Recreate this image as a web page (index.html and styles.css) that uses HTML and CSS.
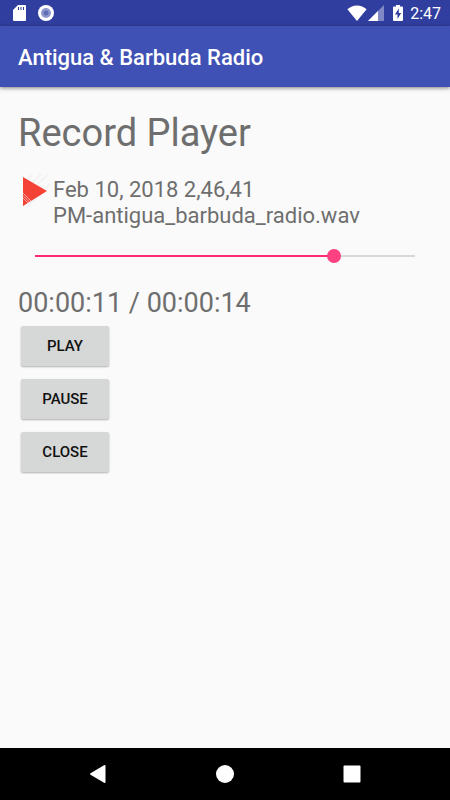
FILE: index.html
```html
<!DOCTYPE html>
<html lang="en">
<head>
<meta charset="utf-8">
<meta name="viewport" content="width=device-width, initial-scale=1">
<title>Antigua &amp; Barbuda Radio</title>
<link rel="stylesheet" href="styles.css">
</head>
<body>
<div class="status-bar">
  <div class="status-group">
    <svg width="14" height="18" viewBox="0 0 14 18" aria-hidden="true"><path fill="#fff" d="M5 1h7q1 0 1 1v14q0 1-1 1H1q-1 0-1-1V6z"/><path stroke="#303f9f" d="M5.500 3v3M8 3v3M10.500 3v3"/></svg>
    <svg width="18" height="18" viewBox="0 0 18 18" aria-hidden="true"><circle cx="9" cy="9" r="8" fill="#fff"/><circle cx="9" cy="9" r="5" fill="#8f99d0"/><circle cx="9" cy="9" r="2.500" fill="#5f6cb6"/></svg>
  </div>
  <div class="status-group status-right">
    <svg width="20" height="16" viewBox="0 0 20 16" aria-hidden="true"><path fill="#fff" d="M10 16 .4 4.300Q4.500 .5 10 .5t9.600 3.800z"/></svg>
    <svg width="16" height="16" viewBox="0 0 16 16" aria-hidden="true"><path fill="#8089c5" d="M16 0v16H0z"/><path fill="#fff" d="M10 6v10H0z"/></svg>
    <svg class="icon-battery" width="10" height="16" viewBox="0 0 10 16" aria-hidden="true"><path fill="#fff" d="M3 0h4v1.500h2q1 0 1 1V15q0 1-1 1H1q-1 0-1-1V2.500q0-1 1-1h2z"/><path fill="#303f9f" d="M5.800 3.500 2 9.500h2.500V14l3.700-6H5.800z"/></svg>
    <span>2:47</span>
  </div>
</div>
<header class="app-bar">Antigua &amp; Barbuda Radio</header>
<main class="content">
  <h1>Record Player</h1>
  <div class="recording">
    <svg width="35" height="35" viewBox="0 0 35 35" aria-hidden="true">
      <path stroke="#f3f3f3" stroke-width="2" d="M10 33 32 11M4 33 25 12M7 9l7-7M12 12 23 1M18 13 29 2"/>
      <path fill="#f44336" d="M5 4 29 18 5 33z"/>
      <path stroke="#f9a49e" d="m5 20 8 8M5 22.500l6.500 6.500M5 25l5 5"/>
    </svg>
    <p>Feb 10, 2018 2,46,41<br>PM-antigua_barbuda_radio.wav</p>
  </div>
  <input class="seek" type="range" min="0" max="14" value="11" aria-label="Playback position" style="--progress: 0.7857">
  <div class="time">00:00:11 / 00:00:14</div>
  <div class="actions">
    <button type="button">PLAY</button>
    <button type="button">PAUSE</button>
    <button type="button">CLOSE</button>
  </div>
</main>
<nav class="nav-bar">
  <button type="button" aria-label="Back"><svg width="20" height="20" viewBox="0 0 20 20"><path fill="#fff" d="M2.500 9.200 16 1.200q1.500-.6 1.500 .8v16q0 1.400-1.500 .8L2.500 10.800q-1-.8 0-1.600z"/></svg></button>
  <button type="button" aria-label="Home"><svg width="20" height="20" viewBox="0 0 20 20"><circle cx="10" cy="10" r="9" fill="#fff"/></svg></button>
  <button type="button" aria-label="Recent apps"><svg width="20" height="20" viewBox="0 0 20 20"><rect x="1.500" y="1.500" width="17" height="17" rx="1" fill="#fff"/></svg></button>
</nav>
</body>
</html>
```
FILE: styles.css
```css
* {
  box-sizing: border-box;
}

body {
  margin: 0;
  min-height: 100vh;
  display: flex;
  flex-direction: column;
  background: #fafafa;
  color: #6e6e6e;
  font-family: Roboto, sans-serif;
}

svg {
  display: block;
  flex: none;
}

.status-bar {
  display: flex;
  align-items: center;
  justify-content: space-between;
  height: 26px;
  padding: 0 9px 0 13px;
  background: #303f9f;
  color: #fff;
  font-size: 16px;
}

.status-group {
  display: flex;
  align-items: center;
  gap: 10px;
}

.status-right {
  gap: 7px;
}

.status-right svg:first-child {
  margin-right: -6px;
}

.icon-battery {
  margin-left: 2px;
}

.app-bar {
  display: flex;
  align-items: center;
  height: 61px;
  padding: 2px 18px 0;
  background: #3f51b5;
  box-shadow: 0 1px 4px rgba(0, 0, 0, 0.5);
  color: #fff;
  font-size: 22px;
  font-weight: 500;
}

.content {
  flex: 1;
  padding: 18px;
}

h1 {
  margin: 0;
  font-size: 38px;
  font-weight: 400;
  line-height: 56px;
}

.recording {
  display: flex;
  margin-top: 12px;
}

.recording p {
  margin: 4px 0 0;
  font-size: 22px;
  line-height: 26px;
}

.seek {
  appearance: none;
  display: block;
  width: calc(100% - 20px);
  height: 20px;
  margin: 17px 10px 0;
  background:
    linear-gradient(#ff2a78, #ff2a78) 7px center / calc((100% - 14px) * var(--progress)) 2px no-repeat,
    linear-gradient(#d8d8d8, #d8d8d8) center / calc(100% - 14px) 2px no-repeat;
}

.seek::-webkit-slider-thumb {
  appearance: none;
  width: 14px;
  height: 14px;
  border-radius: 50%;
  background: #ff4081;
}

.time {
  margin-top: 20px;
  font-size: 27px;
  line-height: 34px;
}

.actions {
  display: flex;
  flex-direction: column;
  align-items: flex-start;
  gap: 13px;
  padding: 6px 3px;
}

.actions button {
  width: 88px;
  height: 40px;
  padding: 0;
  border: 0;
  border-radius: 2px;
  background: #d6d7d7;
  box-shadow: 0 1px 2px rgba(0, 0, 0, 0.3);
  color: #111;
  font: 500 15px Roboto, sans-serif;
}

.nav-bar {
  display: flex;
  justify-content: center;
  gap: 87px;
  height: 52px;
  background: #000;
}

.nav-bar button {
  display: flex;
  align-items: center;
  justify-content: center;
  width: 40px;
  padding: 0;
  border: 0;
  background: none;
}
```
